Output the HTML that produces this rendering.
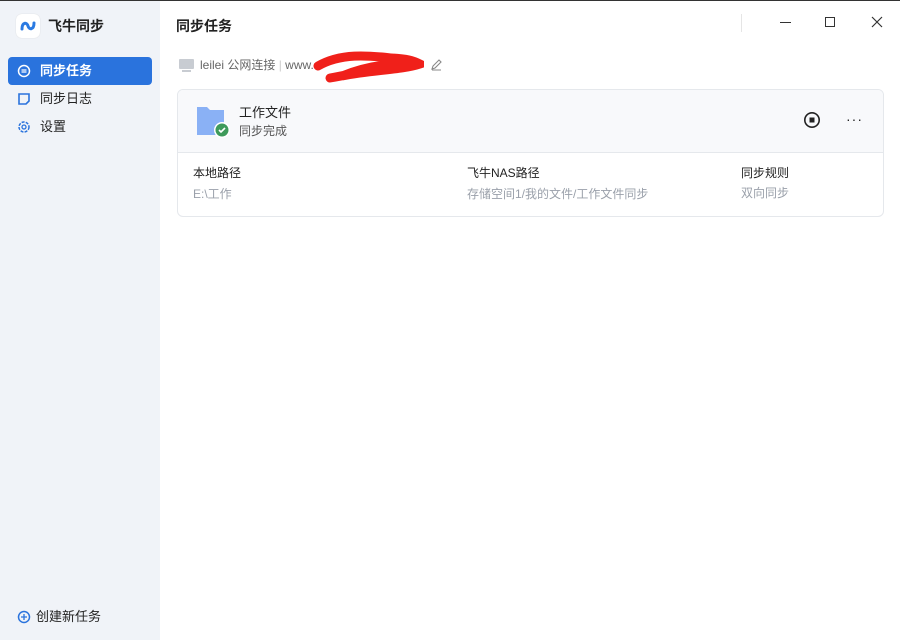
<!DOCTYPE html>
<html><head><meta charset="utf-8"><style>
*{margin:0;padding:0;box-sizing:border-box}
body{width:900px;height:640px;overflow:hidden;background:#fff;font-family:"Liberation Sans","Noto Sans CJK SC",sans-serif;color:#222;position:relative}
.side{position:absolute;left:0;top:0;width:160px;height:640px;background:#f0f3f8}
.abs{position:absolute}
svg.abs{display:block}
.t{font-size:13px;line-height:16px}
.s{font-size:12px;line-height:15px}
</style></head><body>
<div class="abs" style="left:0;top:0;width:900px;height:1px;background:#333;z-index:5"></div>
<div class="side">
 <div class="abs" style="left:16px;top:14px;width:24px;height:24px;background:#fff;border-radius:6px;box-shadow:0 0 1px #ccc"><svg width="24" height="24"><path d="M6 15 C6 8 11 8 12 12 C13 16 18 16 18 9" stroke="#2a7ae2" stroke-width="3" fill="none" stroke-linecap="round"/></svg></div>
 <div class="abs" style="left:48px;top:18px;font-size:14px;line-height:17px;font-weight:bold">飞牛同步</div>
 <div class="abs" style="left:8px;top:57px;width:144px;height:28px;background:#2a73dd;border-radius:4px"></div>
 <svg class="abs" style="left:17px;top:64px" width="14" height="14"><circle cx="7" cy="7" r="5.5" stroke="#fff" stroke-width="1.5" fill="none"/><path d="M4.5 6h5M4.5 8h5" stroke="#fff" stroke-width="1.2"/></svg>
 <div class="abs t" style="left:40px;top:63px;color:#fff;font-weight:bold">同步任务</div>
 <svg class="abs" style="left:17px;top:92px" width="14" height="14"><path d="M2 2h10v7l-3 3H2z" stroke="#2a73dd" stroke-width="1.6" fill="none"/></svg>
 <div class="abs t" style="left:40px;top:91px">同步日志</div>
 <svg class="abs" style="left:17px;top:120px" width="14" height="14"><circle cx="7" cy="7" r="5" stroke="#2a73dd" stroke-width="1.5" fill="none" stroke-dasharray="3 1.2"/><circle cx="7" cy="7" r="2" stroke="#2a73dd" stroke-width="1.3" fill="none"/></svg>
 <div class="abs t" style="left:40px;top:119px">设置</div>
 <svg class="abs" style="left:17px;top:610px" width="14" height="14"><circle cx="7" cy="7" r="5.5" stroke="#2a73dd" stroke-width="1.5" fill="none"/><path d="M4 7h6M7 4v6" stroke="#2a73dd" stroke-width="1.3"/></svg>
 <div class="abs t" style="left:36px;top:609px">创建新任务</div>
</div>
<div class="abs" style="left:176px;top:18px;font-size:14px;line-height:17px;font-weight:bold">同步任务</div>
<div class="abs" style="left:741px;top:14px;width:1px;height:18px;background:#e5e5e5"></div>
<div class="abs" style="left:780px;top:22px;width:11px;height:1px;background:#333"></div>
<div class="abs" style="left:825px;top:17px;width:10px;height:10px;border:1px solid #333"></div>
<svg class="abs" style="left:871px;top:16px" width="12" height="12"><path d="M1 1L11 11M11 1L1 11" stroke="#333" stroke-width="1.2"/></svg>
<div class="abs" style="left:179px;top:59px;width:15px;height:10px;background:#c8ccd2;border-radius:1px"></div>
<div class="abs" style="left:182px;top:70px;width:9px;height:2px;background:#c8ccd2"></div>
<div class="abs s" style="left:200px;top:58px;color:#666">leilei 公网连接 <span style="color:#ccc">|</span> www.</div>
<svg class="abs" style="left:312px;top:50px" width="112" height="34"><path d="M6 16 C30 2 60 6 80 8 C95 9 100 10 108 14 C90 20 60 20 30 26 C50 18 70 14 90 14 C70 18 40 24 18 28" stroke="#f0201a" stroke-width="9" fill="none" stroke-linecap="round"/></svg>
<svg class="abs" style="left:430px;top:58px" width="13" height="13"><path d="M2 11L3 8L9 2L11 4L5 10ZM2 12h9" stroke="#888" stroke-width="1.1" fill="none"/></svg>
<div class="abs" style="left:177px;top:89px;width:707px;height:128px;border:1px solid #e5e8ec;border-radius:6px;overflow:hidden">
 <div style="height:63px;background:#f8f9fb;border-bottom:1px solid #e5e8ec"></div>
</div>
<svg class="abs" style="left:196px;top:104px" width="36" height="36"><path d="M1 3h10l3 3h14v25H1z" fill="#8ab1f5"/><circle cx="26" cy="26" r="8" fill="#fff"/><circle cx="26" cy="26" r="6.5" fill="#3e9a5a"/><path d="M23 26l2 2 4-4" stroke="#fff" stroke-width="1.6" fill="none"/></svg>
<div class="abs t" style="left:239px;top:105px">工作文件</div>
<div class="abs s" style="left:239px;top:124px;color:#555">同步完成</div>
<svg class="abs" style="left:803px;top:111px" width="18" height="18"><circle cx="9" cy="9" r="7.2" stroke="#222" stroke-width="1.6" fill="none"/><rect x="6.5" y="6.5" width="5" height="5" fill="#222"/></svg>
<div class="abs" style="left:846px;top:111px;font-size:14px;line-height:16px;letter-spacing:1px">···</div>
<div class="abs s" style="left:193px;top:166px">本地路径</div>
<div class="abs s" style="left:193px;top:187px;color:#9aa0aa">E:\工作</div>
<div class="abs s" style="left:467px;top:166px">飞牛NAS路径</div>
<div class="abs s" style="left:467px;top:187px;color:#9aa0aa">存储空间1/我的文件/工作文件同步</div>
<div class="abs s" style="left:741px;top:166px">同步规则</div>
<div class="abs s" style="left:741px;top:186px;color:#9aa0aa">双向同步</div>
</body></html>
